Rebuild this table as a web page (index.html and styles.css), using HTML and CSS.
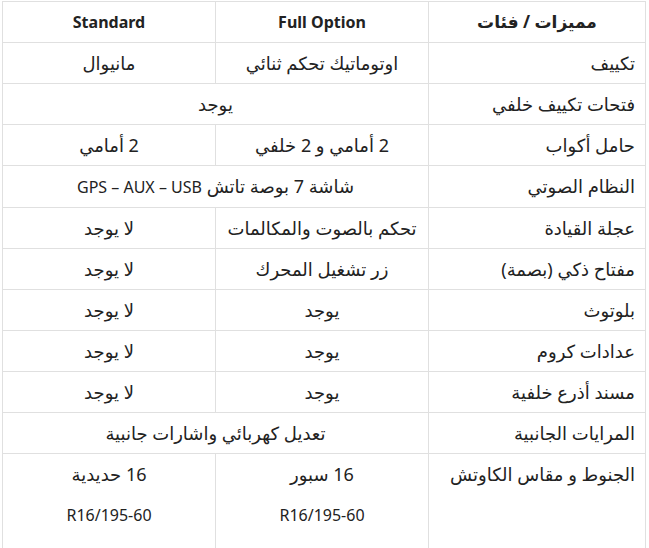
FILE: index.html
```html
<!DOCTYPE html>
<html lang="ar" dir="rtl">
<head>
<meta charset="utf-8">
<title>مميزات / فئات</title>
<link rel="stylesheet" href="styles.css">
</head>
<body>
<table class="specs">
  <colgroup>
    <col class="c-label">
    <col class="c-full">
    <col class="c-std">
  </colgroup>
  <thead>
    <tr>
      <th>مميزات / فئات</th>
      <th class="lat">Full Option</th>
      <th class="lat">Standard</th>
    </tr>
  </thead>
  <tbody>
    <tr><td class="label">تكييف</td><td>اوتوماتيك تحكم ثنائي</td><td>مانيوال</td></tr>
    <tr><td class="label">فتحات تكييف خلفي</td><td colspan="2">يوجد</td></tr>
    <tr><td class="label">حامل أكواب</td><td>2 أمامي و 2 خلفي</td><td>2 أمامي</td></tr>
    <tr><td class="label">النظام الصوتي</td><td colspan="2">شاشة 7 بوصة تاتش <span class="lat">GPS – AUX – USB</span></td></tr>
    <tr><td class="label">عجلة القيادة</td><td>تحكم بالصوت والمكالمات</td><td>لا يوجد</td></tr>
    <tr><td class="label">مفتاح ذكي (بصمة)</td><td>زر تشغيل المحرك</td><td>لا يوجد</td></tr>
    <tr><td class="label">بلوتوث</td><td>يوجد</td><td>لا يوجد</td></tr>
    <tr><td class="label">عدادات كروم</td><td>يوجد</td><td>لا يوجد</td></tr>
    <tr><td class="label">مسند أذرع خلفية</td><td>يوجد</td><td>لا يوجد</td></tr>
    <tr><td class="label">المرايات الجانبية</td><td colspan="2">تعديل كهربائي واشارات جانبية</td></tr>
    <tr class="last"><td class="label">الجنوط و مقاس الكاوتش</td><td>16 سبور<br><br><span class="lat">R16/195-60</span></td><td>16 حديدية<br><br><span class="lat">R16/195-60</span></td></tr>
  </tbody>
</table>
</body>
</html>
```
FILE: styles.css
```css
html, body {
  margin: 0;
  background: #fff;
}
body {
  padding: 1px 3px 0 3px;
  font-family: "Noto Sans", "DejaVu Sans", sans-serif;
  color: #222;
}
.specs {
  width: 643px;
  border-collapse: collapse;
  table-layout: fixed;
  font-size: 18px;
  line-height: 20px;
}
.c-label { width: 217px; }
.c-full { width: 213px; }
.c-std { width: 213px; }
.specs th,
.specs td {
  border: 1px solid #e0e0e0;
  padding: 10px 10px;
  text-align: center;
  vertical-align: top;
}
.specs th {
  font-weight: 700;
  font-size: 17px;
}
.specs .lat {
  font-size: 16px;
}
.specs td.label {
  text-align: right;
}
.specs tr.last td {
  padding-bottom: 40px;
}
```
